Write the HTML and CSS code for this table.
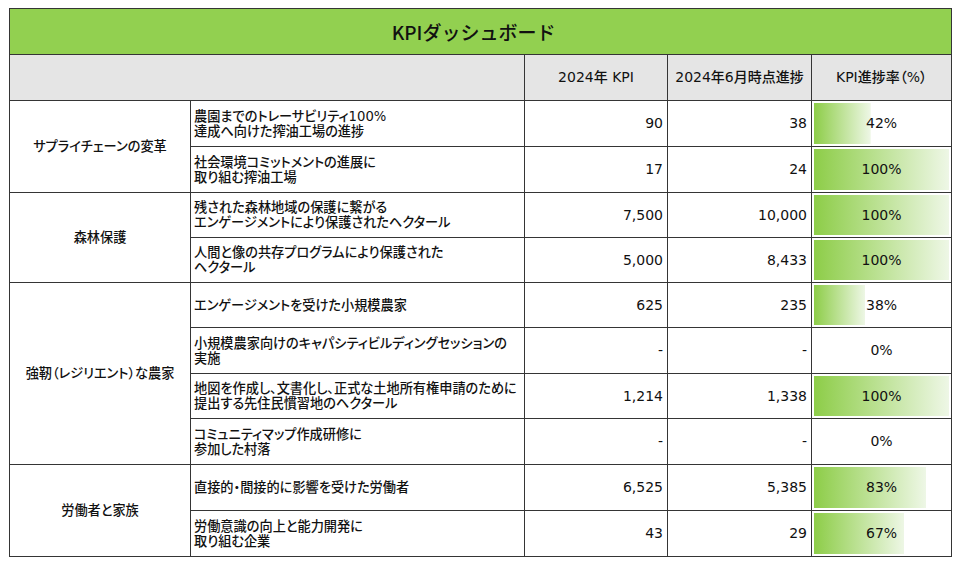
FILE: index.html
```html
<!DOCTYPE html>
<html lang="ja">
<head>
<meta charset="utf-8">
<title>KPIダッシュボード</title>
<link rel="stylesheet" href="styles.css">
</head>
<body>
<table class="kpi">
  <colgroup>
    <col class="c-cat"><col class="c-desc"><col class="c-num"><col class="c-num2"><col class="c-pct">
  </colgroup>
  <thead>
    <tr class="r-title"><th colspan="5" class="title">KPIダッシュボード</th></tr>
    <tr class="r-head">
      <th colspan="2"></th>
      <th>2024年 KPI</th>
      <th>2024年6月時点進捗</th>
      <th>KPI進捗率（%）</th>
    </tr>
  </thead>
  <tbody>
    <tr class="h46">
      <td rowspan="2" class="cat">サプライチェーンの変革</td>
      <td class="desc">農園までのトレーサビリティ100%<br>達成へ向けた搾油工場の進捗</td>
      <td class="num">90</td><td class="num">38</td>
      <td class="pct" style="--p:0.42">42%</td>
    </tr>
    <tr class="h46">
      <td class="desc">社会環境コミットメントの進展に<br>取り組む搾油工場</td>
      <td class="num">17</td><td class="num">24</td>
      <td class="pct" style="--p:1">100%</td>
    </tr>
    <tr class="h45">
      <td rowspan="2" class="cat">森林保護</td>
      <td class="desc">残された森林地域の保護に繋がる<br>エンゲージメントにより保護されたヘクタール</td>
      <td class="num">7,500</td><td class="num">10,000</td>
      <td class="pct" style="--p:1">100%</td>
    </tr>
    <tr class="h45">
      <td class="desc">人間と像の共存プログラムにより保護された<br>ヘクタール</td>
      <td class="num">5,000</td><td class="num">8,433</td>
      <td class="pct" style="--p:1">100%</td>
    </tr>
    <tr class="h45">
      <td rowspan="4" class="cat">強靭（レジリエント）な農家</td>
      <td class="desc">エンゲージメントを受けた小規模農家</td>
      <td class="num">625</td><td class="num">235</td>
      <td class="pct" style="--p:0.38">38%</td>
    </tr>
    <tr class="h46">
      <td class="desc">小規模農家向けのキャパシティビルディングセッションの<br>実施</td>
      <td class="num">-</td><td class="num">-</td>
      <td class="pct">0%</td>
    </tr>
    <tr class="h45">
      <td class="desc">地図を作成し、文書化し、正式な土地所有権申請のために<br>提出する先住民慣習地のヘクタール</td>
      <td class="num">1,214</td><td class="num">1,338</td>
      <td class="pct" style="--p:1">100%</td>
    </tr>
    <tr class="h46">
      <td class="desc">コミュニティマップ作成研修に<br>参加した村落</td>
      <td class="num">-</td><td class="num">-</td>
      <td class="pct">0%</td>
    </tr>
    <tr class="h46">
      <td rowspan="2" class="cat">労働者と家族</td>
      <td class="desc">直接的・間接的に影響を受けた労働者</td>
      <td class="num">6,525</td><td class="num">5,385</td>
      <td class="pct" style="--p:0.83">83%</td>
    </tr>
    <tr class="h46">
      <td class="desc">労働意識の向上と能力開発に<br>取り組む企業</td>
      <td class="num">43</td><td class="num">29</td>
      <td class="pct" style="--p:0.67">67%</td>
    </tr>
  </tbody>
</table>
</body>
</html>
```

FILE: styles.css
```css
* { box-sizing: border-box; }
html, body { background: #ffffff; }
body {
  margin: 0;
  padding: 8px 0 0 9px;
  font-family: "DejaVu Sans", "Noto Sans CJK JP", sans-serif;
  font-size: 13.2px;
  font-weight: 500;
  color: #111;
}
.kpi {
  border-collapse: collapse;
  table-layout: fixed;
  width: 942px;
}
.c-cat { width: 181px; }
.c-desc { width: 334px; }
.c-num { width: 143px; }
.c-num2 { width: 144px; }
.c-pct { width: 140px; }

.kpi th, .kpi td {
  border: 1px solid #353535;
  padding: 0;
  vertical-align: middle;
  line-height: 15px;
}
.r-title { height: 46px; }
.r-head { height: 46px; }
.h46 { height: 46px; }
.h45 { height: 45px; }

.title {
  background: #92d050;
  font-family: "Noto Sans CJK JP", sans-serif;
  font-weight: 500;
  font-size: 19px;
  text-align: center;
  color: #111;
  padding-right: 14px !important;
}
.r-head th {
  background: #e5e5e5;
  font-weight: 500;
  font-size: 14px;
  text-align: center;
  font-feature-settings: "palt";
}
.cat {
  text-align: center;
  font-feature-settings: "palt";
}
.desc {
  padding-left: 3px !important;
  font-feature-settings: "palt";
  white-space: nowrap;
}
.num {
  text-align: right;
  padding-right: 4px !important;
  font-size: 14px;
}
.pct {
  text-align: center;
  font-size: 14px;
  background-image: linear-gradient(to right, #8dcd48 0%, #b9e08f 45%, #eef7e6 100%);
  background-repeat: no-repeat;
  background-position: 2px 2px;
  background-size: calc((100% - 4px) * var(--p, 0)) calc(100% - 4px);
}
```
